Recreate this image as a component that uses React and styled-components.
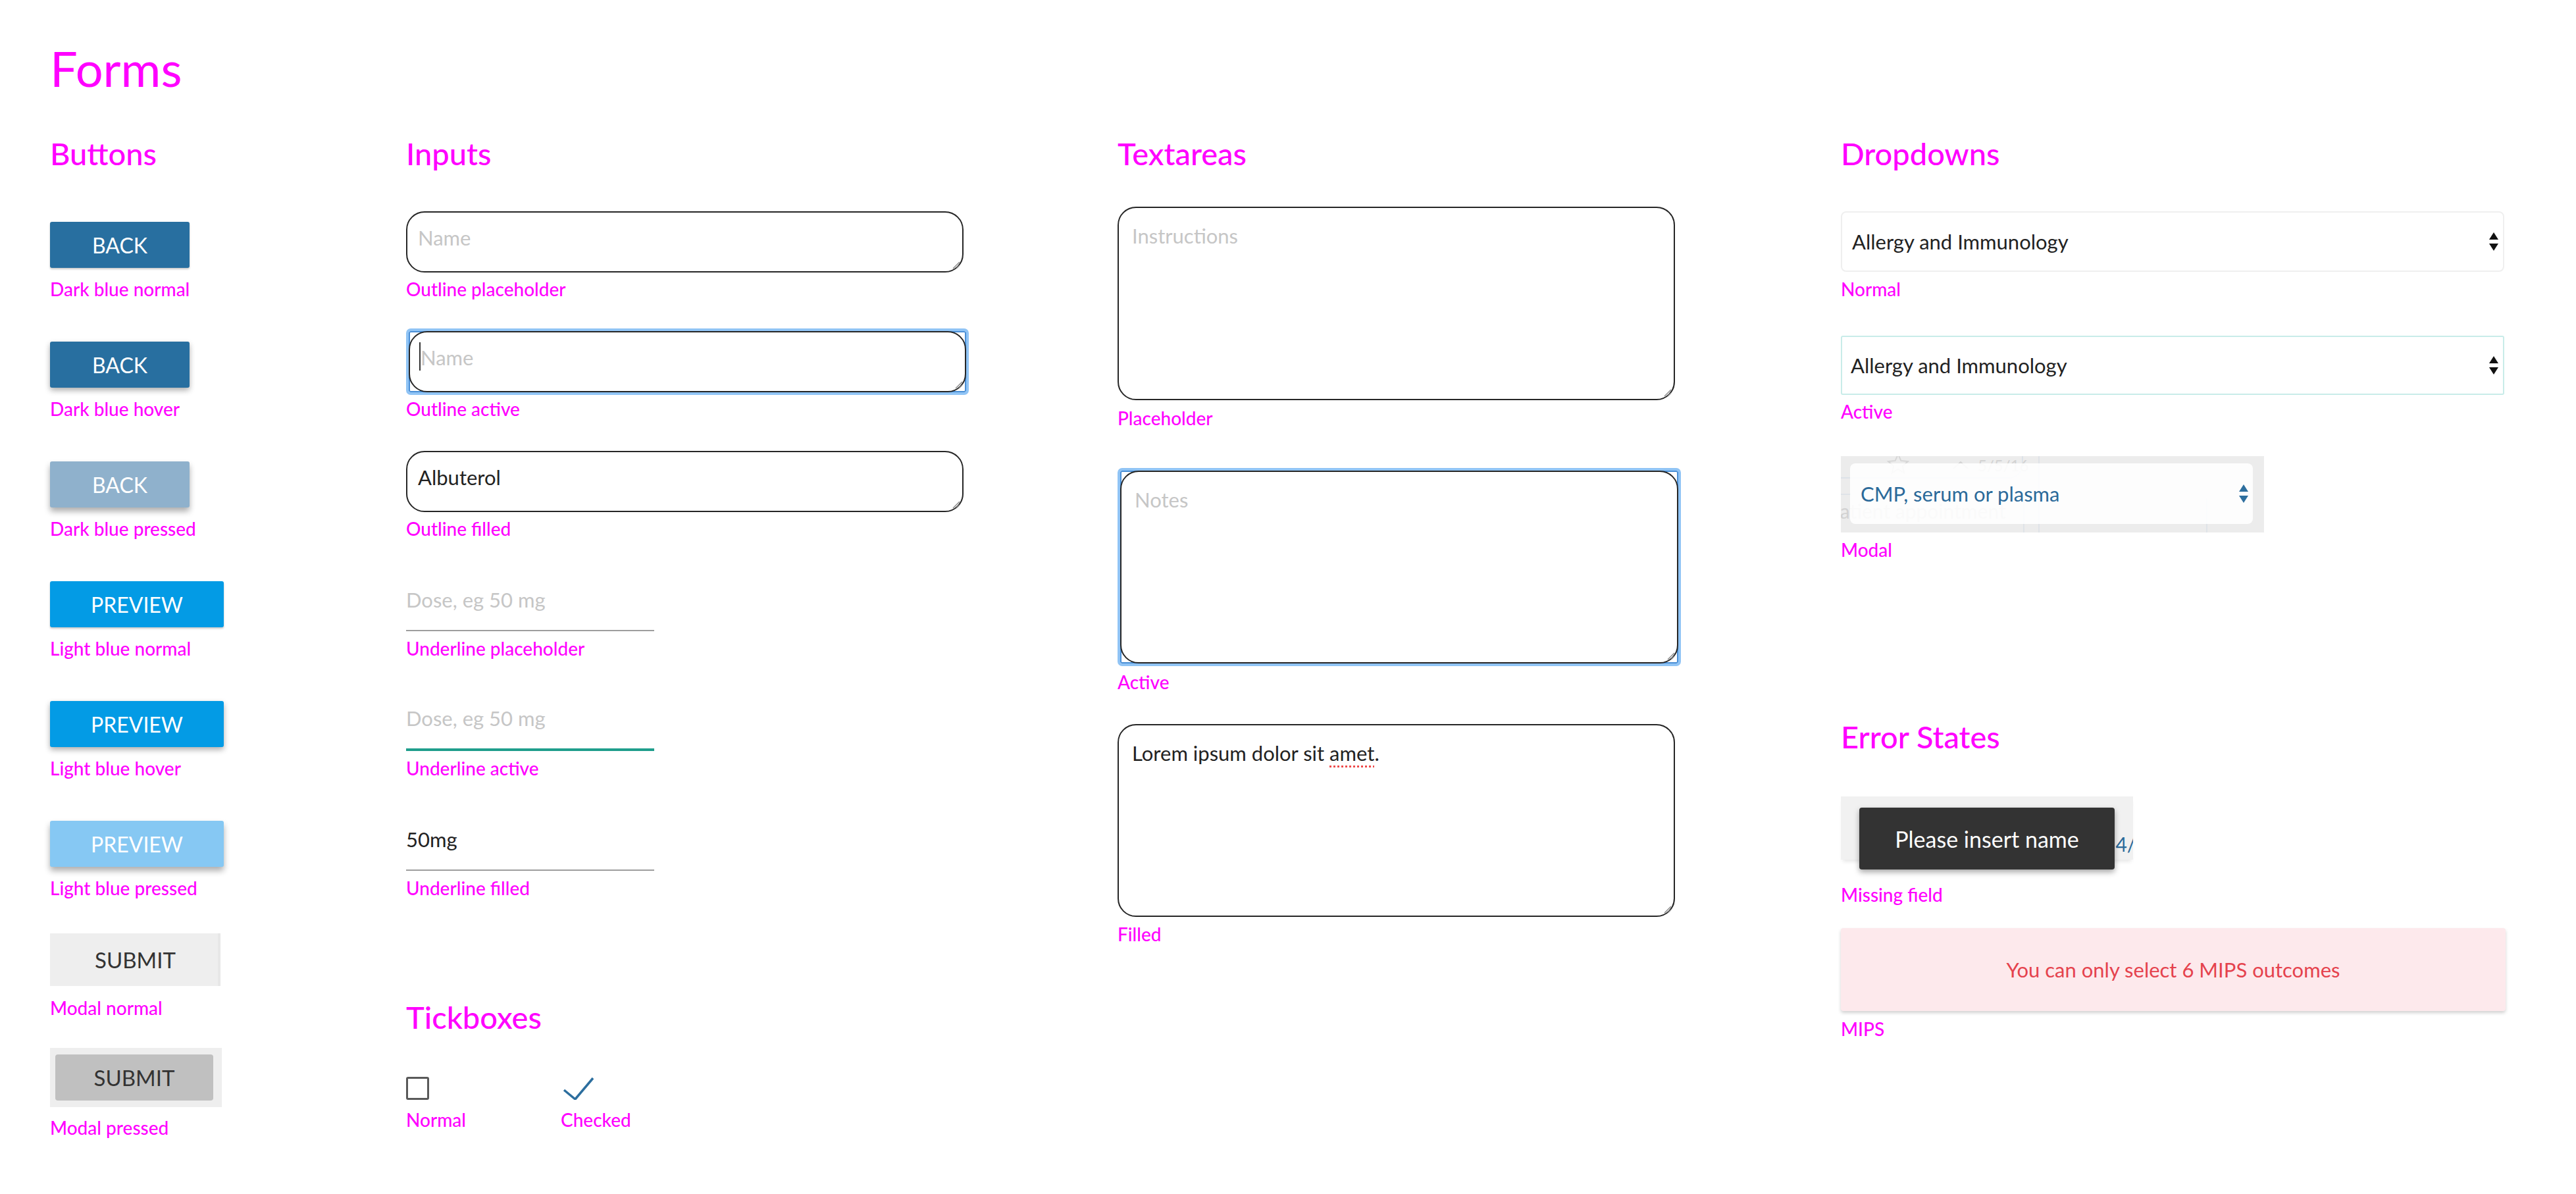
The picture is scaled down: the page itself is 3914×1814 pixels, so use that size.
import React from 'react';
import styled, { createGlobalStyle } from 'styled-components';

const MAGENTA = '#ff00ff';

const GlobalStyle = createGlobalStyle`
  * { box-sizing: border-box; }
  body {
    margin: 0;
    background: #fff;
    font-family: Lato, "Noto Sans", sans-serif;
  }
  button, input, textarea { font-family: inherit; }
`;

const Page = styled.div`
  padding: 59px 0 0 76px;
`;

const Title = styled.h1`
  margin: 0;
  font-size: 74px;
  line-height: 89px;
  font-weight: 400;
  color: ${MAGENTA};
`;

const Columns = styled.div`
  display: grid;
  grid-template-columns: 541px 1081px 1099px 1fr;
  align-items: start;
  margin-top: 57px;
`;

const Column = styled.section`
  display: flex;
  flex-direction: column;
  align-items: flex-start;
`;

const Heading = styled.h2`
  margin: ${p => p.$mt || 0}px 0 0;
  font-size: 47px;
  line-height: 56px;
  font-weight: 500;
  color: ${MAGENTA};
`;

const Slots = styled.div`
  display: flex;
  flex-direction: column;
  margin-top: 13px;
`;

const Slot = styled.div`
  height: 182px;
  display: flex;
  flex-direction: column;
  justify-content: flex-end;
  align-items: flex-start;
`;

const Field = styled.div`
  display: flex;
  flex-direction: column;
  align-items: flex-start;
  margin-top: ${p => p.$mt || 0}px;
`;

const Caption = styled.div`
  margin-top: ${p => p.$gap ?? 15}px;
  font-size: 28px;
  line-height: 34px;
  font-weight: 500;
  color: ${MAGENTA};
  white-space: nowrap;
`;

/* ---------- buttons ---------- */

const fills = {
  dark: { normal: '#286fa0', hover: '#286fa0', pressed: '#8fb1cc' },
  light: { normal: '#039be5', hover: '#039be5', pressed: '#86c8f3' },
};

const shadows = {
  normal: '0 2px 3px rgba(0, 0, 0, 0.22)',
  hover: '0 4px 9px rgba(0, 0, 0, 0.32)',
  pressed: '0 6px 10px rgba(0, 0, 0, 0.32)',
};

const ActionButton = styled.button`
  width: ${p => p.$w}px;
  height: 70px;
  padding: 0;
  border: none;
  border-radius: 3px;
  background: ${p => fills[p.$kind][p.$state]};
  box-shadow: ${p => shadows[p.$state]};
  color: #fff;
  font-size: 32px;
  text-transform: uppercase;
`;

const ModalButton = styled.button`
  width: ${p => p.$w}px;
  height: ${p => p.$h}px;
  padding: 0;
  border: none;
  border-radius: ${p => (p.$pressed ? 4 : 0)}px;
  background: ${p => (p.$pressed ? '#c0c0c0' : '#eeeeee')};
  box-shadow: ${p => (p.$pressed ? 'none' : 'inset -4px 0 0 #e7e7e7')};
  color: #333;
  font-size: 33px;
  text-transform: uppercase;
`;

const PressedFrame = styled.div`
  width: 261px;
  height: 90px;
  padding: 10px 13px 10px 8px;
  background: #eeeeee;
`;

/* ---------- inputs ---------- */

const AreaWrap = styled.div`
  position: relative;
`;

const OutlineArea = styled.textarea`
  display: block;
  width: ${p => p.$w || 847}px;
  height: ${p => p.$h}px;
  padding: ${p => p.$pt}px ${p => p.$pl}px 0;
  border: 2px solid #262626;
  border-radius: 28px;
  background: #fff;
  color: #222;
  font-size: 31px;
  line-height: 40px;
  outline: none;
  resize: none;
  overflow: hidden;

  &::placeholder {
    color: #c6c6c6;
  }
`;

const AreaBox = styled.div`
  width: 847px;
  height: ${p => p.$h}px;
  padding: 22px 20px 0;
  border: 2px solid #262626;
  border-radius: 28px;
  color: #222;
  font-size: 31px;
  line-height: 40px;
  overflow: hidden;
`;

const Grip = styled.svg`
  position: absolute;
  right: 5px;
  bottom: 5px;
  width: 14px;
  height: 14px;
`;

const ResizeGrip = () => (
  <Grip viewBox="0 0 14 14">
    <line x1="13" y1="3" x2="3" y2="13" stroke="#8a8a8a" strokeWidth="1.4" />
    <line x1="13" y1="8" x2="8" y2="13" stroke="#8a8a8a" strokeWidth="1.4" />
  </Grip>
);

const Misspelt = styled.span`
  text-decoration: underline dotted #ee4b4b;
  text-decoration-thickness: 3px;
  text-underline-offset: 7px;
`;

const FocusRing = styled.div`
  position: relative;
  border: 4px solid #90c4f5;
  border-radius: 7px;
  box-shadow: inset 0 0 0 2px #4a8fd6;
`;

const Caret = styled.span`
  position: absolute;
  left: 16px;
  top: 17px;
  width: 2px;
  height: 43px;
  background: #333;
`;

const UnderlineInput = styled.input`
  display: block;
  width: 377px;
  height: ${p => (p.$active ? 72 : 70)}px;
  padding: 0 0 24px;
  border: none;
  border-bottom: ${p => (p.$active ? '4px solid #1f9e8c' : '2px solid #9d9d9d')};
  background: transparent;
  color: #222;
  font-size: 31px;
  line-height: 44px;
  outline: none;

  &::placeholder {
    color: #c6c6c6;
  }
`;

/* ---------- tickboxes ---------- */

const TickRow = styled.div`
  display: flex;
  margin-top: 63px;
`;

const TickItem = styled.div`
  width: 235px;
  display: flex;
  flex-direction: column;
  align-items: flex-start;
`;

const Box = styled.span`
  display: block;
  width: 35px;
  height: 35px;
  border: 3px solid #595959;
  border-radius: 3px;
`;

const Tick = () => (
  <svg width="52" height="35" viewBox="0 0 52 35" style={{ display: 'block' }}>
    <polyline points="5,20 22,34 49,2" fill="none" stroke="#2c6e9e" strokeWidth="3.5" />
  </svg>
);

/* ---------- dropdowns ---------- */

const SelectBox = styled.div`
  width: 1008px;
  height: ${p => p.$h}px;
  display: flex;
  align-items: center;
  justify-content: space-between;
  padding: 0 7px 0 ${p => (p.$active ? 13 : 15)}px;
  border: 2px solid ${p => (p.$active ? '#c8ece9' : '#efefef')};
  border-radius: ${p => (p.$active ? 3 : 8)}px;
  color: #222;
  font-size: 31px;
`;

const Arrows = ({ color }) => (
  <svg width="14" height="28" viewBox="0 0 14 28" style={{ display: 'block' }}>
    <polygon points="0,11 7,0 14,11" fill={color} />
    <polygon points="0,17 14,17 7,28" fill={color} />
  </svg>
);

const ModalFrame = styled.div`
  position: relative;
  width: 643px;
  height: 116px;
  padding: 11px 17px 13px 14px;
  background: #ececec;
  overflow: hidden;
`;

const Ghost = styled.div`
  position: absolute;
  left: ${p => p.$x}px;
  top: ${p => p.$y}px;
  color: #d2d2d2;
  font-size: ${p => p.$fs || 24}px;
  line-height: 1;
  white-space: nowrap;
`;

const GhostPill = styled.div`
  position: absolute;
  left: -40px;
  top: -30px;
  width: 317px;
  height: 64px;
  border: 2px solid #dde2e8;
  border-radius: 22px;
`;

const GhostLine = styled.div`
  position: absolute;
  left: ${p => p.$x}px;
  top: ${p => p.$y}px;
  width: ${p => p.$w || 2}px;
  height: ${p => p.$h}px;
  background: #dfe3e8;
`;

const ModalSelect = styled.div`
  position: relative;
  height: 92px;
  display: flex;
  align-items: center;
  justify-content: space-between;
  padding: 0 7px 0 16px;
  border-radius: 8px;
  background: rgba(255, 255, 255, 0.88);
  color: #2b6a9a;
  font-size: 31px;
`;

/* ---------- error states ---------- */

const MissingWrap = styled.div`
  position: relative;
  width: 444px;
  height: 96px;
`;

const Strip = styled.div`
  position: relative;
  height: 96px;
  background: #f1f1f1;
  overflow: hidden;
  box-shadow: 0 6px 6px -3px rgba(0, 0, 0, 0.1);
`;

const StripText = styled.span`
  position: absolute;
  left: ${p => p.$x}px;
  top: ${p => p.$y}px;
  color: #2b6a9a;
  font-size: 30px;
  line-height: 36px;
  white-space: nowrap;
`;

const Tooltip = styled.div`
  position: absolute;
  left: 28px;
  top: 17px;
  width: 388px;
  height: 94px;
  display: flex;
  align-items: center;
  justify-content: center;
  border-radius: 4px;
  background: #333;
  box-shadow: 0 4px 9px rgba(0, 0, 0, 0.35);
  color: #fff;
  font-size: 34px;
`;

const Alert = styled.div`
  width: 1010px;
  height: 126px;
  display: flex;
  align-items: center;
  justify-content: center;
  border-radius: 4px;
  background: #fde9ec;
  box-shadow: 0 3px 5px rgba(0, 0, 0, 0.18);
  color: #e5424d;
  font-size: 31px;
`;

const buttons = [
  { text: 'Back', kind: 'dark', state: 'normal', w: 212, label: 'Dark blue normal' },
  { text: 'Back', kind: 'dark', state: 'hover', w: 212, label: 'Dark blue hover' },
  { text: 'Back', kind: 'dark', state: 'pressed', w: 212, label: 'Dark blue pressed' },
  { text: 'Preview', kind: 'light', state: 'normal', w: 264, label: 'Light blue normal' },
  { text: 'Preview', kind: 'light', state: 'hover', w: 264, label: 'Light blue hover' },
  { text: 'Preview', kind: 'light', state: 'pressed', w: 264, label: 'Light blue pressed' },
];

const Star = () => (
  <svg width="36" height="36" viewBox="0 0 24 24" style={{ display: 'block' }}>
    <polygon
      points="12,2 14.9,8.6 22,9.3 16.6,14 18.2,21 12,17.3 5.8,21 7.4,14 2,9.3 9.1,8.6"
      fill="none"
      stroke="#d6d6d6"
      strokeWidth="1.3"
    />
  </svg>
);

const Chevron = () => (
  <svg width="24" height="12" viewBox="0 0 24 12" style={{ display: 'block' }}>
    <polyline points="1,11 12,1 23,11" fill="none" stroke="#d2d2d2" strokeWidth="2" />
  </svg>
);

export default function App() {
  return (
    <Page>
      <GlobalStyle />
      <Title>Forms</Title>
      <Columns>
        <Column>
          <Heading>Buttons</Heading>
          <Slots>
            {buttons.map(b => (
              <Slot key={b.label}>
                <ActionButton $kind={b.kind} $state={b.state} $w={b.w}>{b.text}</ActionButton>
                <Caption>{b.label}</Caption>
              </Slot>
            ))}
            <Slot>
              <ModalButton $w={259} $h={80}>Submit</ModalButton>
              <Caption $gap={16}>Modal normal</Caption>
            </Slot>
            <Slot>
              <PressedFrame>
                <ModalButton $pressed $w={240} $h={70}>Submit</ModalButton>
              </PressedFrame>
              <Caption $gap={14}>Modal pressed</Caption>
            </Slot>
          </Slots>
        </Column>

        <Column>
          <Heading>Inputs</Heading>
          <Slots>
            <Slot>
              <AreaWrap>
                <OutlineArea rows={1} $h={93} $pt={18} $pl={16} placeholder="Name" readOnly />
                <ResizeGrip />
              </AreaWrap>
              <Caption $gap={8}>Outline placeholder</Caption>
            </Slot>
            <Slot>
              <FocusRing>
                <OutlineArea rows={1} $w={847} $h={93} $pt={18} $pl={16} placeholder="Name" readOnly />
                <Caret />
                <ResizeGrip />
              </FocusRing>
              <Caption $gap={4}>Outline active</Caption>
            </Slot>
            <Slot>
              <AreaWrap>
                <OutlineArea rows={1} $h={93} $pt={18} $pl={16} defaultValue="Albuterol" readOnly />
                <ResizeGrip />
              </AreaWrap>
              <Caption $gap={8}>Outline filled</Caption>
            </Slot>
            <Slot>
              <UnderlineInput placeholder="Dose, eg 50 mg" readOnly />
              <Caption $gap={9}>Underline placeholder</Caption>
            </Slot>
            <Slot>
              <UnderlineInput $active placeholder="Dose, eg 50 mg" readOnly />
              <Caption $gap={9}>Underline active</Caption>
            </Slot>
            <Slot>
              <UnderlineInput defaultValue="50mg" readOnly />
              <Caption $gap={9}>Underline filled</Caption>
            </Slot>
          </Slots>
          <Heading $mt={151}>Tickboxes</Heading>
          <TickRow>
            <TickItem>
              <Box />
              <Caption $gap={13}>Normal</Caption>
            </TickItem>
            <TickItem>
              <Tick />
              <Caption $gap={13}>Checked</Caption>
            </TickItem>
          </TickRow>
        </Column>

        <Column>
          <Heading>Textareas</Heading>
          <Field $mt={53}>
            <AreaWrap>
              <OutlineArea $h={294} $pt={22} $pl={20} placeholder="Instructions" readOnly />
              <ResizeGrip />
            </AreaWrap>
            <Caption $gap={10}>Placeholder</Caption>
          </Field>
          <Field $mt={59}>
            <FocusRing>
              <OutlineArea $w={848} $h={293} $pt={22} $pl={20} placeholder="Notes" readOnly />
              <ResizeGrip />
            </FocusRing>
            <Caption $gap={7}>Active</Caption>
          </Field>
          <Field $mt={47}>
            <AreaWrap>
              <AreaBox $h={293}>
                Lorem ipsum dolor sit <Misspelt>amet</Misspelt>.
              </AreaBox>
              <ResizeGrip />
            </AreaWrap>
            <Caption $gap={9}>Filled</Caption>
          </Field>
        </Column>

        <Column>
          <Heading>Dropdowns</Heading>
          <Field $mt={60}>
            <SelectBox $h={92}>
              <span>Allergy and Immunology</span>
              <Arrows color="#111" />
            </SelectBox>
            <Caption $gap={9}>Normal</Caption>
          </Field>
          <Field $mt={54}>
            <SelectBox $active $h={90}>
              <span>Allergy and Immunology</span>
              <Arrows color="#111" />
            </SelectBox>
            <Caption $gap={8}>Active</Caption>
          </Field>
          <Field $mt={51}>
            <ModalFrame>
              <GhostPill />
              <Ghost $x={69} $y={-6}><Star /></Ghost>
              <Ghost $x={170} $y={8}><Chevron /></Ghost>
              <Ghost $x={208} $y={2}>5/5/16</Ghost>
              <GhostLine $x={300} $y={0} $h={116} />
              <GhostLine $x={277} $y={67} $h={60} />
              <GhostLine $x={555} $y={64} $h={60} />
              <GhostLine $x={0} $y={57} $w={16} $h={2} />
              <Ghost $x={-18} $y={68} $fs={30}>patient appointment</Ghost>
              <ModalSelect>
                <span>CMP, serum or plasma</span>
                <Arrows color="#2e6f9e" />
              </ModalSelect>
            </ModalFrame>
            <Caption $gap={9}>Modal</Caption>
          </Field>

          <Heading $mt={239}>Error States</Heading>
          <Field $mt={63}>
            <MissingWrap>
              <Strip>
                <StripText $x={400} $y={54}>14/16</StripText>
              </Strip>
              <Tooltip>Please insert name</Tooltip>
            </MissingWrap>
            <Caption $gap={36}>Missing field</Caption>
          </Field>
          <Field $mt={34}>
            <Alert>You can only select 6 MIPS outcomes</Alert>
            <Caption $gap={10}>MIPS</Caption>
          </Field>
        </Column>
      </Columns>
    </Page>
  );
}
